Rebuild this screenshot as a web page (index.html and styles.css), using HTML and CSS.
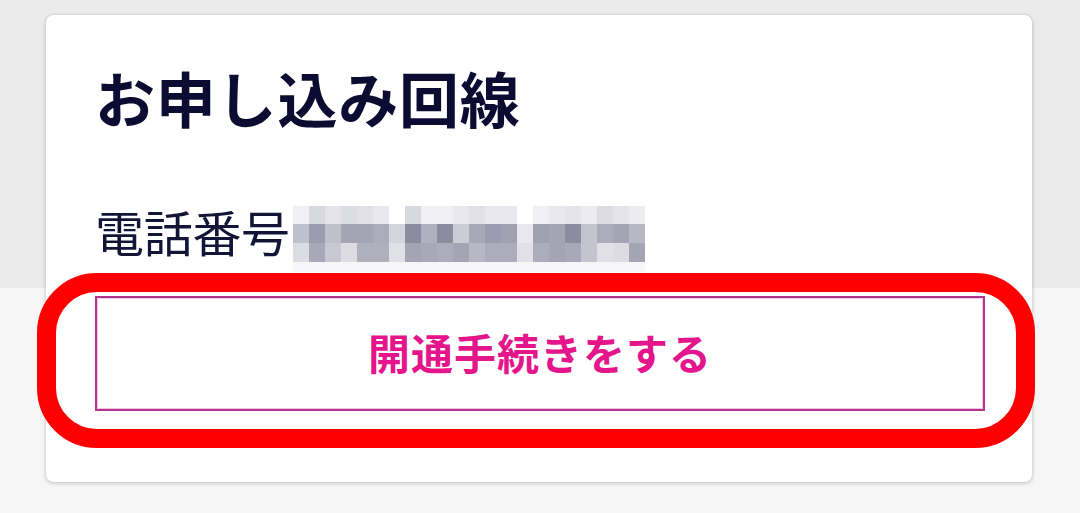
FILE: index.html
```html
<!DOCTYPE html>
<html lang="ja">
<head>
<meta charset="utf-8">
<link rel="stylesheet" href="styles.css">
</head>
<body>
<div class="page">
  <section class="card">
    <h1 class="title">お申し込み回線</h1>
    <div class="phone-row">
      <span class="phone-label">電話番号</span>
      <svg class="mosaic" width="352" height="66" viewBox="0 0 352 66" aria-hidden="true">
        <g>
          <rect x="0" y="0" width="16" height="18" fill="#f0f0f4"/><rect x="0" y="18" width="16" height="19" fill="#c0c0cc"/><rect x="0" y="37" width="16" height="19" fill="#dcdce4"/>
          <rect x="16" y="0" width="16" height="18" fill="#d8d8e0"/><rect x="16" y="18" width="16" height="19" fill="#9c9cb0"/><rect x="16" y="37" width="16" height="19" fill="#a8a8b8"/>
          <rect x="32" y="0" width="16" height="18" fill="#e4e4ea"/><rect x="32" y="18" width="16" height="19" fill="#c0c0ca"/><rect x="32" y="37" width="16" height="19" fill="#c8c8d2"/>
          <rect x="48" y="0" width="16" height="18" fill="#dcdce4"/><rect x="48" y="18" width="16" height="19" fill="#a4a4b4"/><rect x="48" y="37" width="16" height="19" fill="#dcdce2"/>
          <rect x="64" y="0" width="16" height="18" fill="#e0e0e6"/><rect x="64" y="18" width="16" height="19" fill="#a4a4b4"/><rect x="64" y="37" width="16" height="19" fill="#b0b0bc"/>
          <rect x="80" y="0" width="16" height="18" fill="#e8e8ee"/><rect x="80" y="18" width="16" height="19" fill="#acacbc"/><rect x="80" y="37" width="16" height="19" fill="#b0b0bc"/>
          <rect x="96" y="0" width="16" height="18" fill="#ffffff"/><rect x="96" y="18" width="16" height="19" fill="#d4d4dc"/><rect x="96" y="37" width="16" height="19" fill="#e0e0e8"/>
          <rect x="112" y="0" width="16" height="18" fill="#d8d8e0"/><rect x="112" y="18" width="16" height="19" fill="#8c8ca0"/><rect x="112" y="37" width="16" height="19" fill="#a4a4b4"/>
          <rect x="128" y="0" width="16" height="18" fill="#f0f0f4"/><rect x="128" y="18" width="16" height="19" fill="#b0b0c0"/><rect x="128" y="37" width="16" height="19" fill="#a8a8b8"/>
          <rect x="144" y="0" width="16" height="18" fill="#f0f0f4"/><rect x="144" y="18" width="16" height="19" fill="#8c8ca0"/><rect x="144" y="37" width="16" height="19" fill="#acacbc"/>
          <rect x="160" y="0" width="16" height="18" fill="#e8e8ee"/><rect x="160" y="18" width="16" height="19" fill="#ccccd6"/><rect x="160" y="37" width="16" height="19" fill="#a4a4b4"/>
          <rect x="176" y="0" width="16" height="18" fill="#e0e0e6"/><rect x="176" y="18" width="16" height="19" fill="#a8a8b8"/><rect x="176" y="37" width="16" height="19" fill="#b8b8c4"/>
          <rect x="192" y="0" width="16" height="18" fill="#e8e8ee"/><rect x="192" y="18" width="16" height="19" fill="#9c9cb0"/><rect x="192" y="37" width="16" height="19" fill="#acacbc"/>
          <rect x="208" y="0" width="16" height="18" fill="#e8e8ee"/><rect x="208" y="18" width="16" height="19" fill="#a0a0b0"/><rect x="208" y="37" width="16" height="19" fill="#acacbc"/>
          <rect x="224" y="0" width="16" height="18" fill="#ffffff"/><rect x="224" y="18" width="16" height="19" fill="#e8e8ee"/><rect x="224" y="37" width="16" height="19" fill="#e0e0e6"/>
          <rect x="240" y="0" width="16" height="18" fill="#f0f0f4"/><rect x="240" y="18" width="16" height="19" fill="#a0a0b0"/><rect x="240" y="37" width="16" height="19" fill="#acacbc"/>
          <rect x="256" y="0" width="16" height="18" fill="#e8e8ee"/><rect x="256" y="18" width="16" height="19" fill="#a4a4b4"/><rect x="256" y="37" width="16" height="19" fill="#a4a4b4"/>
          <rect x="272" y="0" width="16" height="18" fill="#e4e4ea"/><rect x="272" y="18" width="16" height="19" fill="#8c8ca0"/><rect x="272" y="37" width="16" height="19" fill="#a8a8b8"/>
          <rect x="288" y="0" width="16" height="18" fill="#ececf0"/><rect x="288" y="18" width="16" height="19" fill="#c4c4ce"/><rect x="288" y="37" width="16" height="19" fill="#c4c4ce"/>
          <rect x="304" y="0" width="16" height="18" fill="#dcdce2"/><rect x="304" y="18" width="16" height="19" fill="#acacbc"/><rect x="304" y="37" width="16" height="19" fill="#e0e0e6"/>
          <rect x="320" y="0" width="16" height="18" fill="#e4e4ea"/><rect x="320" y="18" width="16" height="19" fill="#a4a4b4"/><rect x="320" y="37" width="16" height="19" fill="#dcdce2"/>
          <rect x="336" y="0" width="16" height="18" fill="#ececf0"/><rect x="336" y="18" width="16" height="19" fill="#b8b8c4"/><rect x="336" y="37" width="16" height="19" fill="#a4a4b4"/>
          <rect x="0" y="56" width="352" height="10" fill="#f6f6f9"/>
        </g>
      </svg>
    </div>
    <div class="action">
      <button class="open-btn" type="button">開通手続きをする</button>
      <span class="highlight" aria-hidden="true"></span>
    </div>
  </section>
</div>
</body>
</html>
```

FILE: styles.css
```css
* { box-sizing: border-box; }

html, body {
  margin: 0;
  padding: 0;
}

body {
  width: 1080px;
  height: 513px;
  overflow: hidden;
  background: linear-gradient(to bottom, #ebebeb 0, #ebebeb 288px, #f6f6f6 288px, #f6f6f6 100%);
  font-family: "Noto Sans CJK JP", "Noto Sans", sans-serif;
}

.page {
  padding: 15px 48px 0 46px;
}

.card {
  width: 986px;
  height: 467px;
  background: #ffffff;
  border-radius: 7px;
  box-shadow: 0 1px 4px rgba(0, 0, 0, 0.22), 0 0 1px rgba(0, 0, 0, 0.18);
  padding: 52px 47px 0 49px;
  display: flex;
  flex-direction: column;
}

.title {
  margin: 0;
  font-size: 60px;
  line-height: 60px;
  font-weight: 700;
  color: #0c0c33;
  letter-spacing: 0.8px;
}

.phone-row {
  margin-top: 79px;
  display: flex;
  align-items: flex-start;
  height: 66px;
}

.phone-label {
  font-size: 49px;
  line-height: 49px;
  font-weight: 400;
  color: #141436;
  letter-spacing: -0.3px;
}

.mosaic {
  display: block;
  margin-left: 3px;
}

.action {
  position: relative;
  margin-top: 24px;
}

.open-btn {
  display: flex;
  align-items: center;
  justify-content: center;
  width: 890px;
  height: 115px;
  background: #ffffff;
  border: 2px solid #b0358c;
  box-shadow: inset 0 0 0 1px #f2c6e2;
  color: #e5158b;
  font-family: "Noto Sans CJK JP", "Noto Sans", sans-serif;
  font-size: 42px;
  font-weight: 700;
  letter-spacing: 1px;
  padding: 0 0 4px 0;
  margin: 0;
}

.highlight {
  position: absolute;
  left: -58px;
  top: -23px;
  width: 998px;
  height: 175px;
  border: 19px solid #ff0000;
  border-radius: 60px;
  pointer-events: none;
}
```
